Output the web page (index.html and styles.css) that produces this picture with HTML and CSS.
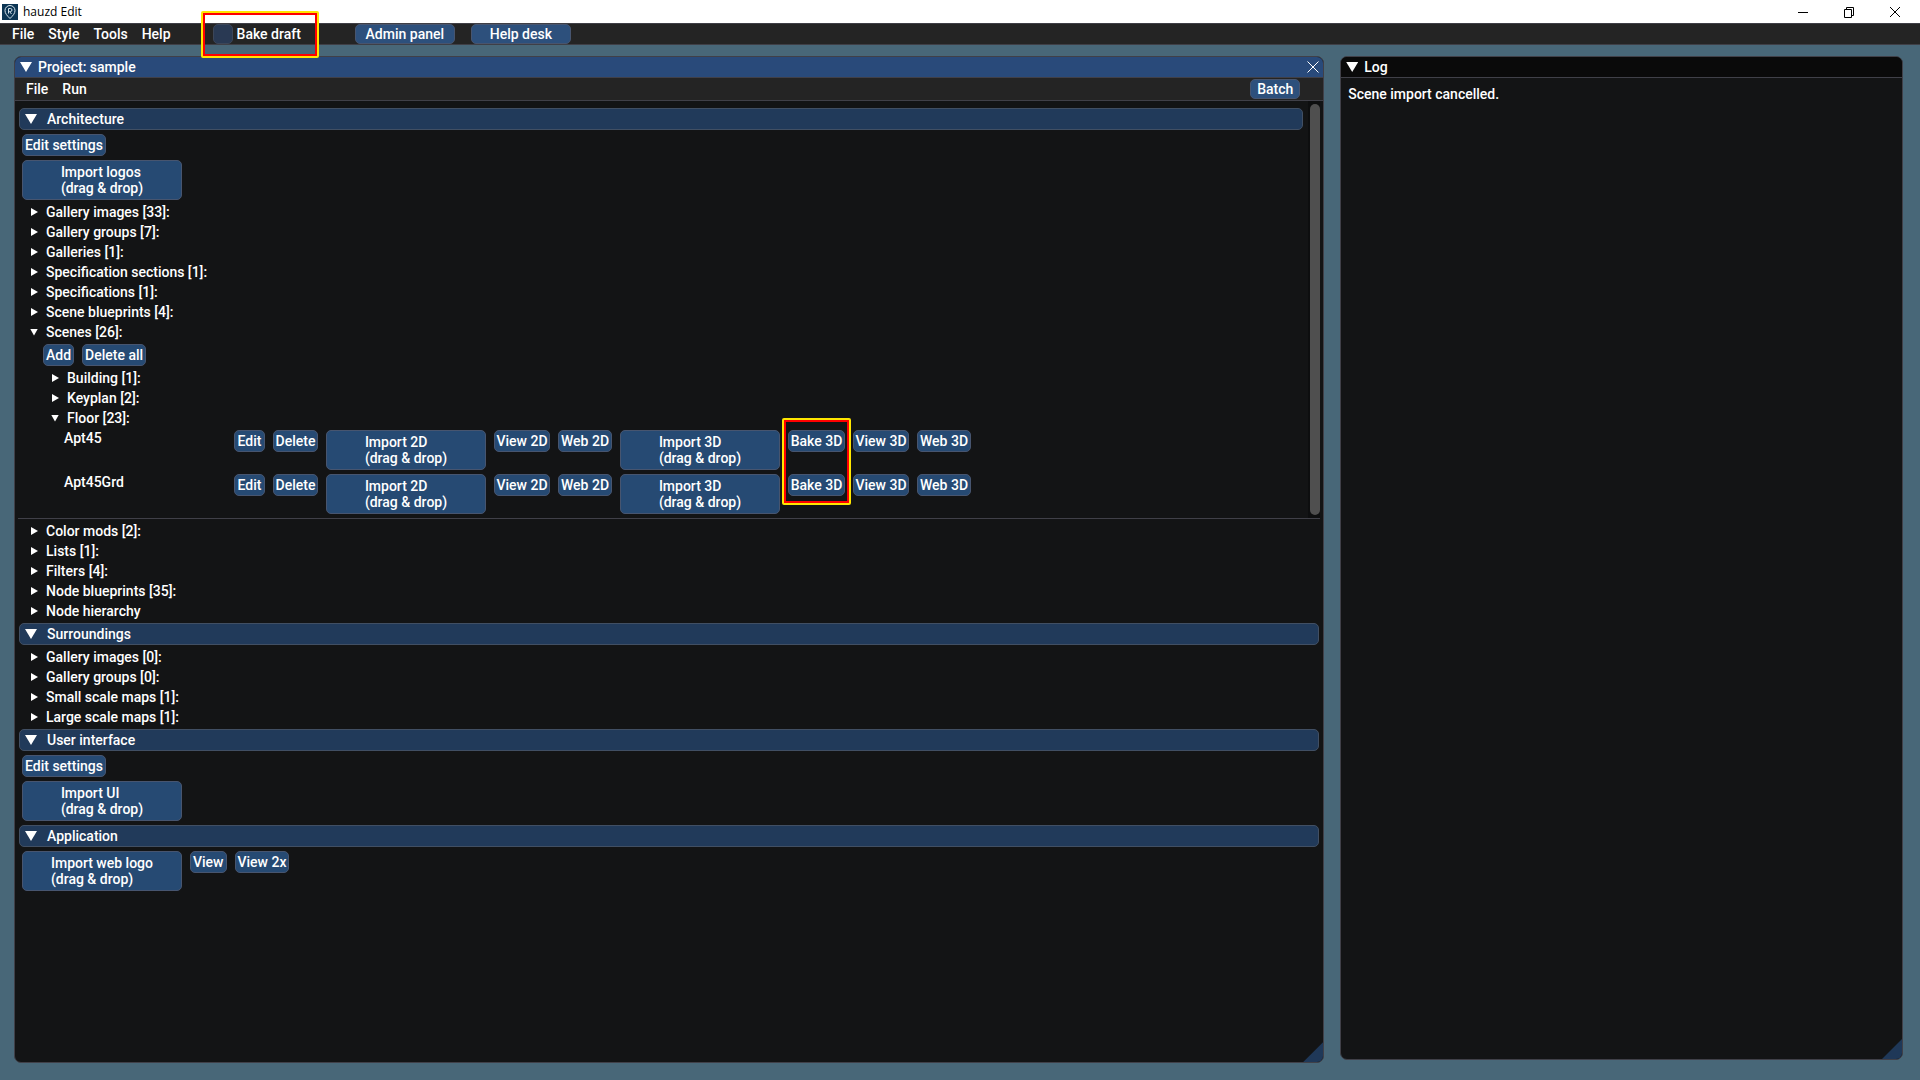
FILE: index.html
```html
<!DOCTYPE html>
<html lang="en">
<head>
  <meta charset="UTF-8">
  <meta name="viewport" content="width=device-width, initial-scale=1">
  <title>hauzd Edit</title>
  <link rel="stylesheet" href="styles.css">
</head>

<body>

  <!-- window frame -->
  <header class="titlebar">
    <svg class="logo" viewBox="0 0 16 16">
      <rect width="16" height="16" fill="#0b3554"/>
      <path d="M8 14.5C5 11.5 3 9.5 3 6.5a5 5 0 0 1 10 0c0 3-2 5-5 8z" fill="none" stroke="#d5e3ec"/>
      <path d="M6.5 9.5v-5h2a1.5 1.5 0 0 1 0 3h-1l2 2.5" fill="none" stroke="#d5e3ec"/>
    </svg>
    <span class="app-name">hauzd Edit</span>
    <div class="frame-buttons">
      <button aria-label="Minimize"><svg viewBox="0 0 12 12"><path d="M1 6.5h10"/></svg></button>
      <button aria-label="Restore"><svg viewBox="0 0 12 12"><path d="M1.5 3.5h7v8h-7zM3.5 3.5v-2h7v8h-2"/></svg></button>
      <button aria-label="Close"><svg viewBox="0 0 12 12"><path d="M1 1l10 10M11 1L1 11"/></svg></button>
    </div>
  </header>

  <nav class="menubar">
    <button class="menu">File</button>
    <button class="menu">Style</button>
    <button class="menu">Tools</button>
    <button class="menu">Help</button>
    <div class="draft marked">
      <input type="checkbox" id="draft">
      <label for="draft">Bake draft</label>
    </div>
    <button class="btn bar-btn">Admin panel</button>
    <button class="btn bar-btn">Help desk</button>
  </nav>

  <main class="desktop">

    <!-- project window -->
    <section class="window project">
      <div class="window-title">
        <span class="arrow big down"></span>
        <h2>Project: sample</h2>
        <button class="close" aria-label="Close project"><svg viewBox="0 0 12 12"><path d="M0.5 0.5l11 11M11.5 0.5l-11 11"/></svg></button>
      </div>
      <div class="window-menu">
        <button class="menu">File</button>
        <button class="menu">Run</button>
        <button class="btn batch">Batch</button>
      </div>

      <div class="scroll-area">
        <div class="content">
          <button class="section"><span class="arrow big down"></span>Architecture</button>
          <button class="btn">Edit settings</button>
          <button class="btn drop"><span>Import logos<br>(drag &amp; drop)</span></button>
          <button class="node"><span class="arrow"></span>Gallery images [33]:</button>
          <button class="node"><span class="arrow"></span>Gallery groups [7]:</button>
          <button class="node"><span class="arrow"></span>Galleries [1]:</button>
          <button class="node"><span class="arrow"></span>Specification sections [1]:</button>
          <button class="node"><span class="arrow"></span>Specifications [1]:</button>
          <button class="node"><span class="arrow"></span>Scene blueprints [4]:</button>
          <button class="node"><span class="arrow down"></span>Scenes [26]:</button>
          <div class="children">
            <div class="row">
              <button class="btn">Add</button>
              <button class="btn">Delete all</button>
            </div>
            <button class="node"><span class="arrow"></span>Building [1]:</button>
            <button class="node"><span class="arrow"></span>Keyplan [2]:</button>
            <button class="node"><span class="arrow down"></span>Floor [23]:</button>
            <div class="children">
              <div class="scene">
                <span>Apt45</span>
                <button class="btn">Edit</button>
                <button class="btn">Delete</button>
                <button class="btn drop"><span>Import 2D<br>(drag &amp; drop)</span></button>
                <button class="btn">View 2D</button>
                <button class="btn">Web 2D</button>
                <button class="btn drop"><span>Import 3D<br>(drag &amp; drop)</span></button>
                <div class="bake marked"><button class="btn">Bake 3D</button></div>
                <button class="btn">View 3D</button>
                <button class="btn">Web 3D</button>
              </div>
              <div class="scene">
                <span>Apt45Grd</span>
                <button class="btn">Edit</button>
                <button class="btn">Delete</button>
                <button class="btn drop"><span>Import 2D<br>(drag &amp; drop)</span></button>
                <button class="btn">View 2D</button>
                <button class="btn">Web 2D</button>
                <button class="btn drop"><span>Import 3D<br>(drag &amp; drop)</span></button>
                <button class="btn">Bake 3D</button>
                <button class="btn">View 3D</button>
                <button class="btn">Web 3D</button>
              </div>
            </div>
          </div>
        </div>
        <div class="scrollbar"><div class="thumb"></div></div>
      </div>

      <div class="content rest">
        <button class="node"><span class="arrow"></span>Color mods [2]:</button>
        <button class="node"><span class="arrow"></span>Lists [1]:</button>
        <button class="node"><span class="arrow"></span>Filters [4]:</button>
        <button class="node"><span class="arrow"></span>Node blueprints [35]:</button>
        <button class="node"><span class="arrow"></span>Node hierarchy</button>

        <button class="section"><span class="arrow big down"></span>Surroundings</button>
        <button class="node"><span class="arrow"></span>Gallery images [0]:</button>
        <button class="node"><span class="arrow"></span>Gallery groups [0]:</button>
        <button class="node"><span class="arrow"></span>Small scale maps [1]:</button>
        <button class="node"><span class="arrow"></span>Large scale maps [1]:</button>

        <button class="section"><span class="arrow big down"></span>User interface</button>
        <button class="btn">Edit settings</button>
        <button class="btn drop"><span>Import UI<br>(drag &amp; drop)</span></button>

        <button class="section"><span class="arrow big down"></span>Application</button>
        <div class="row">
          <button class="btn drop"><span>Import web logo<br>(drag &amp; drop)</span></button>
          <button class="btn">View</button>
          <button class="btn">View 2x</button>
        </div>
      </div>
    </section>

    <!-- log window -->
    <section class="window log">
      <div class="window-title">
        <span class="arrow big down"></span>
        <h2>Log</h2>
      </div>
      <p>Scene import cancelled.</p>
    </section>

  </main>

</body>
</html>
```
FILE: styles.css
```css
* {
  box-sizing: border-box;
}
body {
  margin: 0;
  min-height: 100vh;
  display: flex;
  flex-direction: column;
  background: #486778;
  color: #fff;
  font: 500 14px/16px Roboto, sans-serif;
}
button {
  margin: 0;
  padding: 0;
  border: 0;
  background: none;
  color: inherit;
  font: inherit;
  text-align: left;
  white-space: nowrap;
}
h2, p {
  margin: 0;
  font: inherit;
}

/* window frame */
.titlebar {
  height: 23px;
  display: flex;
  align-items: center;
  padding: 0 19px 0 2px;
  background: #fff;
  color: #000;
}
.logo {
  width: 16px;
  height: 16px;
  margin-right: 5px;
}
.app-name {
  font: 12px/16px "Open Sans", sans-serif;
}
.frame-buttons {
  display: flex;
  gap: 34px;
  margin-left: auto;
}
.frame-buttons button,
.close {
  width: 12px;
  height: 12px;
}
svg {
  display: block;
}
.frame-buttons path,
.close path {
  fill: none;
  stroke: currentColor;
}

.menubar {
  height: 22px;
  display: flex;
  align-items: center;
  padding-left: 12px;
  background: #242424;
  border-top: 1px solid #3f3f46;
  border-bottom: 1px solid #3f3f46;
}
.menu {
  margin-right: 14px;
}
.draft {
  display: flex;
  align-items: center;
  gap: 4px;
  margin: 0 54px 0 28px;
}
.draft input {
  appearance: none;
  width: 20px;
  height: 20px;
  margin: 0;
  border: 1px solid #3c4658;
  border-radius: 5px;
  background: #293953;
}

/* red and yellow frame over a control */
.marked {
  position: relative;
  z-index: 1;
}
.marked::after {
  content: "";
  position: absolute;
  inset: -13px -18px -14px -12px;
  border: 2px solid #ffe600;
  border-radius: 2px;
  box-shadow: inset 0 0 0 2px #f00;
  pointer-events: none;
}
.bake.marked::after {
  inset: -12px -6px -53px -6px;
}

.btn {
  height: 22px;
  padding: 0 2px;
  border: 1px solid #47556f;
  border-radius: 5px;
  background: #264a73;
  text-align: center;
}
.bar-btn {
  width: 100px;
  height: 20px;
  margin-right: 16px;
  background: #2d507c;
}
.drop {
  width: 160px;
  height: 40px;
  display: flex;
  align-items: center;
  justify-content: center;
  text-align: left;
}

.arrow {
  width: 7px;
  height: 8px;
  background: #fff;
  clip-path: polygon(0 0, 100% 50%, 0 100%);
}
.arrow.down {
  width: 8px;
  height: 7px;
  clip-path: polygon(0 0, 100% 0, 50% 100%);
}
.arrow.big {
  width: 12px;
  height: 10px;
}

/* windows */
.desktop {
  flex: 1;
  display: flex;
  gap: 16px;
  padding: 11px 17px 17px 14px;
}
.window {
  position: relative;
  background: #131415;
  border: 1px solid #404048;
  border-radius: 7px;
  overflow: hidden;
}
.window::after {
  content: "";
  position: absolute;
  right: 0;
  bottom: 0;
  width: 20px;
  height: 20px;
  background: #1f3858;
  clip-path: polygon(100% 0, 100% 100%, 0 100%);
}
.project {
  flex: 1311;
}
.log {
  flex: 562;
  margin-bottom: 3px;
}
.window-title {
  height: 21px;
  display: flex;
  align-items: center;
  gap: 6px;
  padding: 0 4px 0 5px;
  background: #0a0a0a;
  border-bottom: 1px solid #404048;
}
.project .window-title {
  background: #294a7a;
}
.close {
  margin-left: auto;
}
.log p {
  padding: 8px 7px;
}
.window-menu {
  height: 23px;
  display: flex;
  align-items: center;
  padding: 0 23px 0 11px;
  background: #242424;
  border-bottom: 1px solid #404048;
}
.batch {
  width: 50px;
  height: 20px;
  margin-left: auto;
  background: #2d507c;
}

.scroll-area {
  display: flex;
  margin: 0 3px;
  border-bottom: 1px solid #404048;
}
.content {
  flex: 1;
  display: flex;
  flex-direction: column;
  align-items: flex-start;
  gap: 4px;
  padding: 7px 8px 4px 4px;
}
.rest {
  padding: 4px 7px;
}
.scrollbar {
  width: 12px;
  padding: 3px 0 3px 2px;
  background: #0d0e0f;
}
.thumb {
  height: 100%;
  border-radius: 5px;
  background: #4f4f4f;
}
.section {
  align-self: stretch;
  height: 22px;
  display: flex;
  align-items: center;
  gap: 10px;
  margin: 0 -3px;
  padding: 0 5px;
  border: 1px solid #414f63;
  border-radius: 5px;
  background: #213a5a;
}
.node {
  height: 16px;
  display: flex;
  align-items: center;
  gap: 8px;
  padding-left: 9px;
}
.node .down {
  margin: 0 0 0 -1px;
}
.children {
  display: flex;
  flex-direction: column;
  gap: 4px;
  padding-left: 21px;
}
.row {
  display: flex;
  align-items: flex-start;
  gap: 8px;
}
/* one line per scene, buttons stay in columns */
.scene {
  display: grid;
  grid-template-columns: 162px 31px 45px 160px 56px 54px 160px 57px 56px 54px;
  align-items: start;
  gap: 8px;
}
.scene .btn {
  width: 100%;
  padding: 0;
}
```
